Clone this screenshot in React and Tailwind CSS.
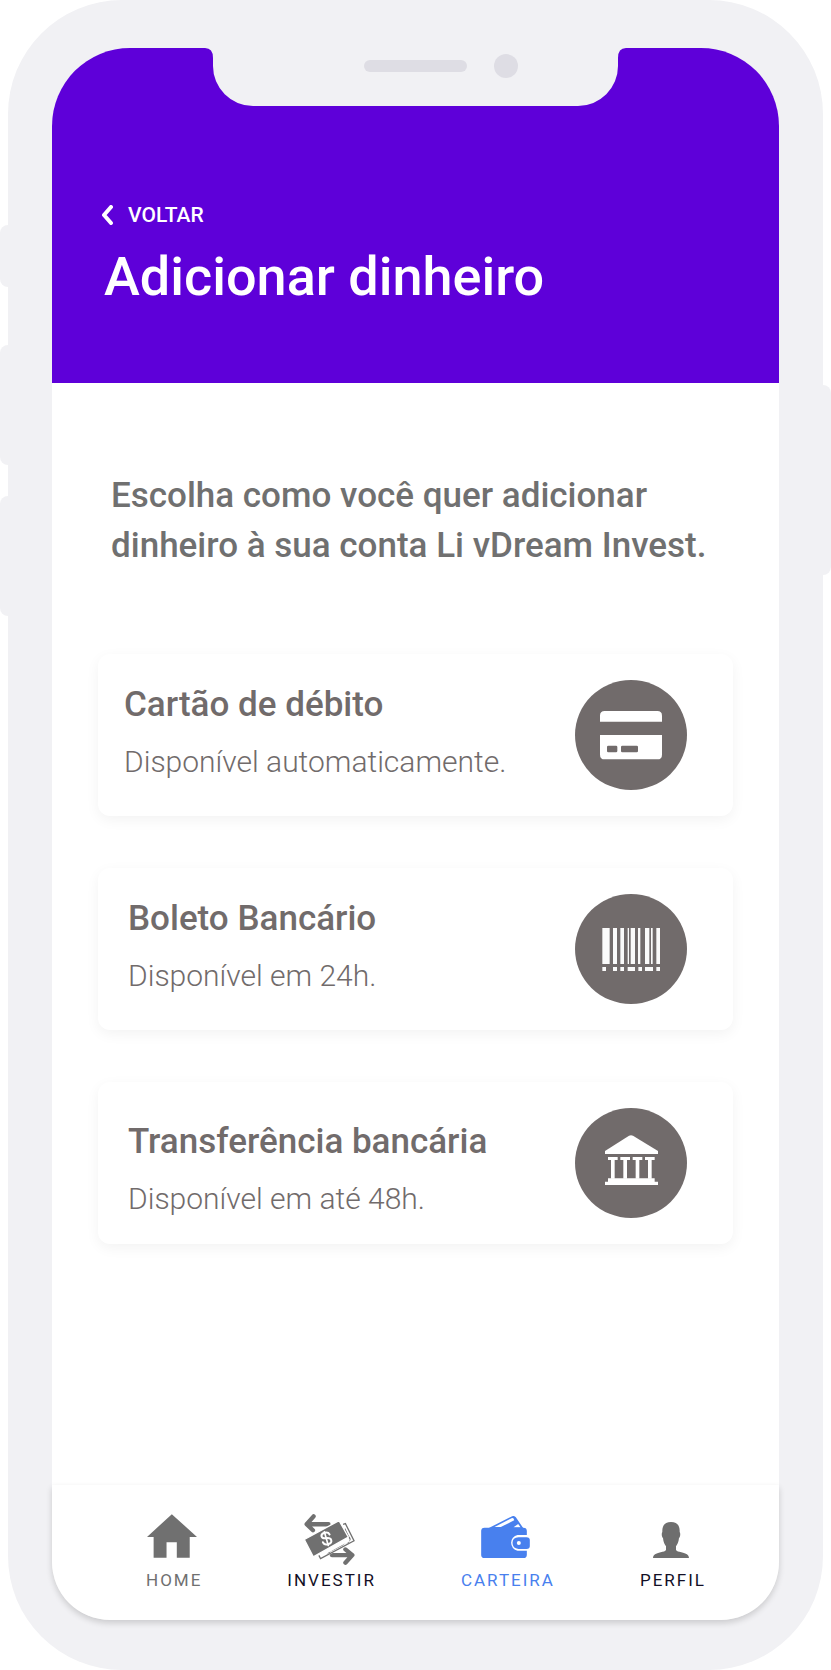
const iconClass = "h-[110px] w-28 shrink-0";

function DebitCardIcon() {
  return (
    <svg viewBox="0 0 336 330" className={iconClass} aria-hidden="true">
      <ellipse cx="168" cy="165" rx="168" ry="165" fill="#716b6b" />
      <path d="M75 125v-18q0-14 14-14h158q14 0 14 14v18z" fill="#fff" />
      <path d="M75 165h186v59q0 14-14 14H89q-14 0-14-14z" fill="#fff" />
      <rect x="96" y="197" width="31" height="20" rx="4" fill="#716b6b" />
      <rect x="138" y="197" width="51" height="20" rx="4" fill="#716b6b" />
    </svg>
  );
}

const bars = [
  [82, 22],
  [114, 12],
  [136, 11],
  [158, 4],
  [167, 13],
  [189, 7],
  [210, 13],
  [228, 5],
  [244, 11],
];
const barFeet = [
  [82, 11],
  [114, 12],
  [136, 11],
  [158, 22],
  [190, 11],
  [210, 24],
  [244, 11],
];

function BarcodeIcon() {
  return (
    <svg viewBox="0 0 336 330" className={iconClass} aria-hidden="true">
      <ellipse cx="168" cy="165" rx="168" ry="165" fill="#716b6b" />
      <g fill="#fafafa">
        {bars.map(([x, w]) => (
          <rect key={x} x={x} y="102" width={w} height="108" />
        ))}
        {barFeet.map(([x, w]) => (
          <rect key={x} x={x} y="219" width={w} height="12" />
        ))}
      </g>
    </svg>
  );
}

function BankIcon() {
  return (
    <svg viewBox="0 0 336 330" className={iconClass} aria-hidden="true">
      <ellipse cx="168" cy="165" rx="168" ry="165" fill="#716b6b" />
      <g fill="#fff">
        <path d="M90 129l72-46q6-3 12 0l75 46v9H90z" />
        {[99, 136, 173, 210].map((x) => (
          <path key={x} d={`M${x} 147h29v9h-9v56h-11v-56h-9z`} />
        ))}
        <path d="M99 211h140v10h10v10H90v-10h9z" />
      </g>
    </svg>
  );
}

function HomeIcon() {
  return (
    <svg viewBox="0 0 151 132" className="h-11 w-[50px]" fill="#707070" aria-hidden="true">
      <path d="M75 0l76 69h-22v63H90V85H59v47H20V69H0z" />
    </svg>
  );
}

function InvestIcon() {
  return (
    <svg viewBox="0 0 154 154" className="-mb-[7px] size-[51px]" aria-hidden="true">
      <g fill="none" stroke="#707070" strokeWidth="13" strokeLinecap="round" strokeLinejoin="round">
        <path d="M29 7L8 31l19 18M8 31h66" />
        <path d="M125 107l21 17-21 23M146 124H84" />
      </g>
      <path d="M45 124l82-92 25 50-100 55z" fill="#fff" />
      <path d="M118 31l7-2 26 52-101 54-5-10" fill="none" stroke="#707070" strokeWidth="4" />
      <path
        d="M64 122q6 0 9-5l50-27q8 0 13-4l2-9-14-25q-3-6 0-10l12 25q8 8 3 14l-10 8q-7 0-12 6l-32 17q-5 0-8 6z"
        fill="#707070"
      />
      <path
        d="M1 77L106 20l28 50L28 129z"
        fill="#707070"
        stroke="#fff"
        strokeWidth="4"
        strokeLinejoin="round"
      />
      <g transform="rotate(-16 67 73)" fill="none" stroke="#fff" strokeWidth="6" strokeLinecap="round">
        <path d="M80 65q-2-9-13-9-12 0-12 8 0 7 12 9 13 2 13 10 0 9-13 9-12 0-13-10" />
        <path d="M67 53v43" strokeWidth="5" />
      </g>
    </svg>
  );
}

function WalletIcon() {
  return (
    <svg viewBox="0 0 146 126" className="h-[42px] w-[49px]" fill="#4880ee" aria-hidden="true">
      <path d="M23 36L90 2q9-5 14 2l22 32z" />
      <path d="M40 33L91 7q5-2 7 2l1 4-40 20z" fill="#fff" />
      <path d="M97 34l14-10 7 10z" fill="#fff" />
      <path d="M10 35h117q10 0 10 10v71q0 10-10 10H10q-10 0-10-10V45q0-10 10-10z" />
      <path d="M146 57h-37a24 24 0 0 0 0 47h37z" fill="#fff" />
      <path d="M112 64h24q10 0 10 9v17q0 9-10 9h-24q-18-2-18-18t18-17z" />
      <circle cx="113" cy="81" r="6" fill="#fff" />
    </svg>
  );
}

function ProfileIcon() {
  return (
    <svg viewBox="0 0 108 108" className="size-9" fill="#6e6e6e" aria-hidden="true">
      <path d="M54 0c18 0 27 10 26 30 3 3 2 15-2 18-1 13-5 19-9 25v11c2 4 8 5 16 7 15 4 22 7 23 17H0c1-10 8-13 23-17 8-2 14-3 16-7V73c-4-6-8-12-9-25-4-3-5-15-2-18C27 10 36 0 54 0z" />
    </svg>
  );
}

const options = [
  {
    title: "Cartão de débito",
    note: "Disponível automaticamente.",
    Icon: DebitCardIcon,
    spacing: "pl-[26px] pt-[26px]",
  },
  {
    title: "Boleto Bancário",
    note: "Disponível em 24h.",
    Icon: BarcodeIcon,
    spacing: "pl-[30px] pt-[26px]",
  },
  {
    title: "Transferência bancária",
    note: "Disponível em até 48h.",
    Icon: BankIcon,
    spacing: "pl-[30px] pt-[35px]",
  },
];

const tabs = [
  { label: "HOME", Icon: HomeIcon, color: "text-[#707070]" },
  { label: "INVESTIR", Icon: InvestIcon, color: "text-[#130f26]" },
  { label: "CARTEIRA", Icon: WalletIcon, color: "text-[#4880ee]", current: true },
  { label: "PERFIL", Icon: ProfileIcon, color: "text-[#130f26]" },
];

function Header() {
  return (
    <header className="rounded-t-[78px] bg-[#5e00d9] pb-[74px]">
      <div className="flex justify-center">
        <svg viewBox="0 0 421 58" className="h-[58px] w-[421px]" aria-hidden="true">
          <path
            d="M0 0q8 0 8 10v8a40 40 0 0 0 40 40h325a40 40 0 0 0 40-40v-8q0-10 8-10z"
            fill="#f1f1f4"
          />
          <rect x="159" y="12" width="103" height="12" rx="6" fill="#dedde4" />
          <circle cx="301" cy="18" r="12" fill="#dedde4" />
        </svg>
      </div>
      <div className="px-[50px] pt-[93px]">
        <button type="button" className="flex items-center gap-[15px] text-[21px] leading-8 font-medium text-white">
          <svg viewBox="0 0 11 20" className="h-5 w-[11px]" aria-hidden="true">
            <path
              d="M9 2L2 10l7 8"
              fill="none"
              stroke="#fff"
              strokeWidth="4"
              strokeLinecap="round"
              strokeLinejoin="round"
            />
          </svg>
          VOLTAR
        </button>
        <h1 className="mt-3.5 pl-0.5 text-[54px] leading-16 font-medium text-white">Adicionar dinheiro</h1>
      </div>
    </header>
  );
}

function OptionCard({ title, note, Icon, spacing }) {
  return (
    <button
      type="button"
      className="flex h-[162px] w-full items-center justify-between rounded-xl bg-white pr-[46px] text-left text-[#716b6b] shadow-[0_4px_14px_rgba(0,0,0,0.05)]"
    >
      <span className={`flex flex-col self-stretch ${spacing}`}>
        <span className="text-[35px] leading-[50px] font-medium">{title}</span>
        <span className="mt-2 text-[30px] leading-[48px] font-light">{note}</span>
      </span>
      <Icon />
    </button>
  );
}

function TabBar() {
  return (
    <nav className="flex h-[135px] justify-between rounded-b-[58px] bg-white pt-7 pr-[73px] pl-[94px] shadow-[0_3px_6px_rgba(0,0,0,0.16)]">
      {tabs.map(({ label, Icon, color, current }) => (
        <a
          key={label}
          href={`#${label.toLowerCase()}`}
          aria-current={current ? "page" : undefined}
          className={`flex flex-col items-center gap-2.5 text-[17px] leading-6 tracking-[2px] ${color}`}
        >
          <span className="flex h-[45px] items-end pr-1">
            <Icon />
          </span>
          {label}
        </a>
      ))}
    </nav>
  );
}

export default function App() {
  return (
    <div
      className="relative flex min-h-screen px-2"
      style={{ fontFamily: 'Roboto, "Liberation Sans", sans-serif' }}
    >
      <div className="absolute top-[225px] left-0 h-[62px] w-4 rounded-l-lg bg-[#f1f1f4]" />
      <div className="absolute top-[345px] left-0 h-[120px] w-4 rounded-l-lg bg-[#f1f1f4]" />
      <div className="absolute top-[496px] left-0 h-[120px] w-4 rounded-l-lg bg-[#f1f1f4]" />
      <div className="absolute top-[385px] right-0 h-[190px] w-4 rounded-r-lg bg-[#f1f1f4]" />
      <div className="relative flex flex-1 rounded-[114px] bg-[#f1f1f4] px-11 pt-12 pb-[50px]">
        <div className="flex flex-1 flex-col rounded-t-[78px] rounded-b-[58px] bg-white">
          <Header />
          <main className="flex-1 px-[46px] pt-[88px] pb-12">
            <p className="px-[13px] text-[35px] leading-[50px] font-medium text-[#707070]">
              Escolha como você quer adicionar dinheiro à sua conta Li vDream Invest.
            </p>
            <div className="mt-[83px] flex flex-col gap-[52px]">
              {options.map((option) => (
                <OptionCard key={option.title} {...option} />
              ))}
            </div>
          </main>
          <TabBar />
        </div>
      </div>
    </div>
  );
}
